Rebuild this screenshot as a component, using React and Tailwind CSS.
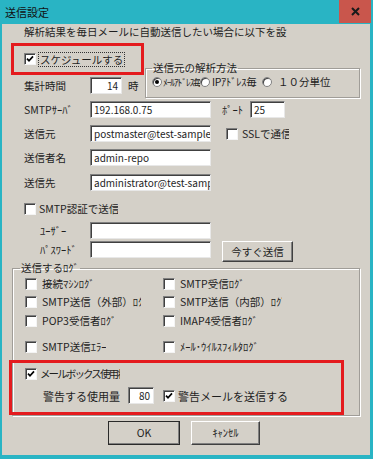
import React from 'react';

const font = "font-['Noto_Sans_CJK_JP','Noto_Sans',sans-serif]";

// classic sunken check box
const Check = ({ checked }) => (
    <span className="w-[12px] h-[12px] shrink-0 bg-white border border-t-[#808080] border-l-[#808080] border-r-[#f4f4f4] border-b-[#f4f4f4] shadow-[inset_1px_1px_0_#404040] flex items-center justify-center">
        {checked && (
            <svg width="8" height="8" viewBox="0 0 8 8">
                <path d="M1 3.6 L3 5.8 L7 1.4" fill="none" stroke="#000" strokeWidth="1.7" />
            </svg>
        )}
    </span>
);

const Radio = ({ checked }) => (
    <span className="w-[10px] h-[10px] shrink-0 rounded-full bg-white border border-[#808080] shadow-[inset_1px_1px_0_#404040] flex items-center justify-center">
        {checked && <span className="w-[4px] h-[4px] rounded-full bg-black" />}
    </span>
);

const Edit = ({ w, value = '', right = false }) => (
    <div
        className={`h-[17px] shrink-0 bg-white border border-t-[#808080] border-l-[#808080] border-r-[#e8e8e8] border-b-[#e8e8e8] shadow-[inset_1px_1px_0_#404040] overflow-hidden whitespace-nowrap flex items-center text-[10px] ${right ? 'justify-end pr-[3px]' : 'pl-[3px]'} ${w}`}
    >
        {value}
    </div>
);

const Btn = ({ w, h, children, strong = false }) => (
    <div
        className={`shrink-0 flex items-center justify-center bg-[#d4d0c8] border ${strong ? 'border-[#2a2a2a]' : 'border-t-[#fff] border-l-[#fff] border-r-[#404040] border-b-[#404040]'} shadow-[inset_-1px_-1px_0_#808080] ${w} ${h}`}
    >
        {children}
    </div>
);

const Row = ({ className = '', children }) => (
    <div className={`flex items-center h-[17px] ${className}`}>{children}</div>
);

const LogItem = ({ label, w, clip = '' }) => (
    <div className={`flex items-center gap-[5px] shrink-0 ${w}`}>
        <Check />
        <span className={`block shrink-0 whitespace-nowrap overflow-hidden ${clip}`}>{label}</span>
    </div>
);

export default function App() {
    return (
        <div className={`w-[373px] h-[459px] bg-[#29b4c4] flex flex-col text-[10.5px] leading-[14px] text-[#1e1e1e] ${font}`}>
            {/* title bar */}
            <div className="h-[24px] flex items-start shrink-0">
                <span className="pl-[5px] pt-[5px] text-[11px] leading-[14px] text-[#111]">送信設定</span>
                <div className="ml-auto mr-[2px] w-[32px] h-[23px] bg-[#c9564c] flex items-center justify-center">
                    <svg width="9" height="9" viewBox="0 0 9 9">
                        <path d="M1 1 L8 8 M8 1 L1 8" stroke="#1a1a1a" strokeWidth="2" />
                    </svg>
                </div>
            </div>

            <div className="flex-1 ml-[2px] mr-[3px] mb-[4px] bg-[#d4d0c8] flex flex-col">
                <div className="h-[14px] mt-[1px] pl-[22px] whitespace-nowrap">解析結果を毎日メールに自動送信したい場合に以下を設</div>

                {/* schedule + analysis method */}
                <div className="flex mt-[4px]">
                    <div className="w-[143px] shrink-0 flex flex-col">
                        <div className="ml-[9px] w-[133px] h-[32px] border-[3px] border-[#e41b1e] flex items-center pl-[10px]">
                            <Check checked />
                            <span className="ml-[2px] px-[1px] border border-dotted border-[#333] leading-[13px]">スケジュールする</span>
                        </div>
                        <Row className="mt-[2px] pl-[22px]">
                            <span className="w-[66px]">集計時間</span>
                            <Edit w="w-[32px]" value="14" right />
                            <span className="ml-[6px]">時</span>
                        </Row>
                    </div>
                    <fieldset className="mt-[18px] w-[215px] border border-[#a09d98] shadow-[1px_1px_0_#fff,inset_1px_1px_0_#fff] pb-[8px]">
                        <legend className="ml-[6px] px-[1px]">送信元の解析方法</legend>
                        <div className="flex items-center h-[14px] pl-[6px]">
                            <div className="w-[48px] flex items-center gap-[1px] overflow-hidden shrink-0">
                                <Radio checked />
                                <span className="whitespace-nowrap text-[9.5px] tracking-[-1.1px]">ﾒｰﾙｱﾄﾞﾚｽ毎</span>
                            </div>
                            <div className="w-[62px] flex items-center gap-[2px] overflow-hidden shrink-0">
                                <Radio />
                                <span className="whitespace-nowrap tracking-[-0.3px]">IPｱﾄﾞﾚｽ毎</span>
                            </div>
                            <div className="flex items-center gap-[6px] shrink-0">
                                <Radio />
                                <span className="whitespace-nowrap">１０分単位</span>
                            </div>
                        </div>
                    </fieldset>
                </div>

                <Row className="mt-[3px] pl-[22px]">
                    <span className="w-[66px]">SMTPｻｰﾊﾞ</span>
                    <Edit w="w-[121px]" value="192.168.0.75" />
                    <span className="ml-[11px] w-[28px]">ﾎﾟｰﾄ</span>
                    <Edit w="w-[35px]" value="25" />
                </Row>
                <Row className="mt-[7px] pl-[22px]">
                    <span className="w-[66px]">送信元</span>
                    <Edit w="w-[121px]" value="postmaster@test-sample.jp" />
                    <span className="ml-[15px]"><Check /></span>
                    <span className="ml-[4px] w-[47px] whitespace-nowrap overflow-hidden">SSLで通信</span>
                </Row>
                <Row className="mt-[7px] pl-[22px]">
                    <span className="w-[66px]">送信者名</span>
                    <Edit w="w-[121px]" value="admin-repo" />
                </Row>
                <Row className="mt-[8px] pl-[22px]">
                    <span className="w-[66px]">送信先</span>
                    <Edit w="w-[121px]" value="administrator@test-sample.jp" />
                </Row>
                <Row className="mt-[9px] pl-[22px]">
                    <Check />
                    <span className="ml-[3px] w-[79px] whitespace-nowrap overflow-hidden">SMTP認証で送信</span>
                </Row>
                <Row className="mt-[5px] pl-[38px]">
                    <span className="w-[50px]">ﾕｰｻﾞｰ</span>
                    <Edit w="w-[121px]" />
                </Row>
                <div className="mt-[2px] pl-[38px] flex items-start h-[21px]">
                    <span className="w-[50px] h-[17px] flex items-center">ﾊﾟｽﾜｰﾄﾞ</span>
                    <Edit w="w-[121px]" />
                    <div className="ml-[11px]">
                        <Btn w="w-[71px]" h="h-[21px]">今すぐ送信</Btn>
                    </div>
                </div>

                {/* log group */}
                <fieldset className="mt-[-1px] ml-[10px] w-[348px] border border-[#a09d98] shadow-[1px_1px_0_#fff,inset_1px_1px_0_#fff]">
                    <legend className="ml-[7px] px-[1px]">送信するﾛｸﾞ</legend>
                    <div className="flex flex-col pl-[12px] pt-[2px]">
                        <div className="flex h-[14px]">
                            <LogItem w="w-[138px]" label="接続ﾏｼﾝﾛｸﾞ" />
                            <LogItem w="w-[110px]" label="SMTP受信ﾛｸﾞ" />
                        </div>
                        <div className="flex h-[14px] mt-[4px]">
                            <LogItem w="w-[138px]" clip="w-[99px]" label="SMTP送信（外部）ﾛｸﾞ" />
                            <LogItem w="w-[110px]" clip="w-[102px]" label="SMTP送信（内部）ﾛｸﾞ" />
                        </div>
                        <div className="flex h-[14px] mt-[5px]">
                            <LogItem w="w-[138px]" clip="w-[72px]" label="POP3受信者ﾛｸﾞ" />
                            <LogItem w="w-[110px]" label="IMAP4受信者ﾛｸﾞ" />
                        </div>
                        <div className="flex h-[14px] mt-[12px]">
                            <LogItem w="w-[138px]" label="SMTP送信ｴﾗｰ" />
                            <LogItem w="w-[110px]" clip="w-[91px]" label="ﾒｰﾙ･ｳｲﾙｽﾌｨﾙﾀﾛｸﾞ" />
                        </div>
                    </div>
                    <div className="mt-[6px] ml-[-4px] w-[335px] h-[55px] border-[3px] border-[#e41b1e] flex flex-col">
                        <div className="flex items-center h-[14px] mt-[4px] pl-[13px]">
                            <Check checked />
                            <span className="ml-[3px] w-[80px] whitespace-nowrap overflow-hidden tracking-[-1.9px]">メールボックス使用状況</span>
                        </div>
                        <Row className="mt-[6px] pl-[31px]">
                            <span className="w-[85px] text-[11px]">警告する使用量</span>
                            <Edit w="w-[26px]" value="80" right />
                            <span className="ml-[9px]"><Check checked /></span>
                            <span className="ml-[3px] text-[11px] whitespace-nowrap">警告メールを送信する</span>
                        </Row>
                    </div>
                </fieldset>

                <div className="flex mt-[5px]">
                    <div className="ml-[106px]">
                        <Btn w="w-[72px]" h="h-[24px]" strong>OK</Btn>
                    </div>
                    <div className="ml-[11px]">
                        <Btn w="w-[69px]" h="h-[24px]">ｷｬﾝｾﾙ</Btn>
                    </div>
                </div>
            </div>
        </div>
    );
}
